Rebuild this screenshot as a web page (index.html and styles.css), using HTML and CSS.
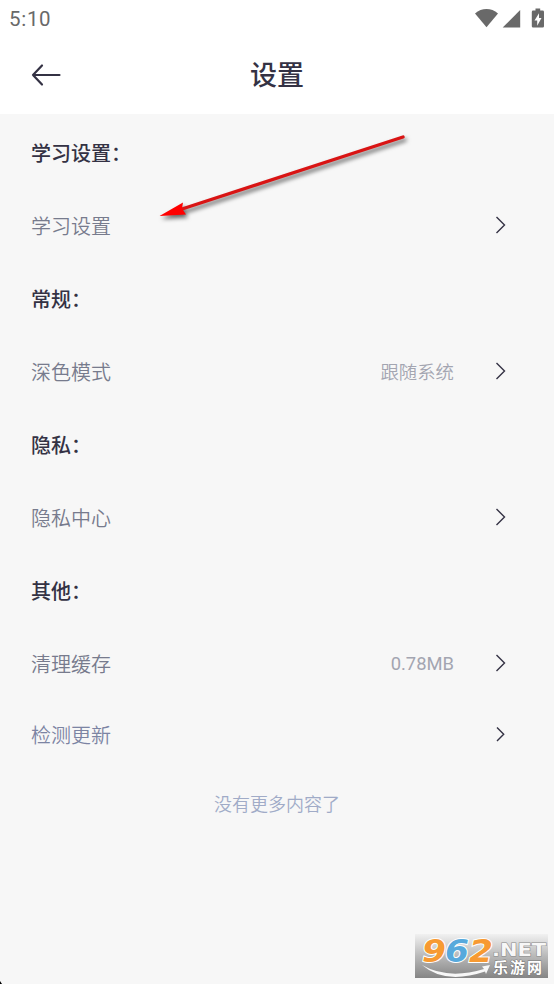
FILE: index.html
```
<!DOCTYPE html>
<html lang="zh-CN">
<head>
<meta charset="utf-8">
<title>设置</title>
<link rel="stylesheet" href="styles.css">
</head>
<body>
<div class="screen">
  <header class="header">
    <div class="status">
      <span class="clock">5:10</span>
      <svg class="status-icons" width="69" height="22" viewBox="0 0 69 22" fill="#696969">
        <path d="M0 5.400C3.500 2.400 7.400 1 11.500 1S19.500 2.400 23 5.400L11.500 19.300Z"/>
        <path d="M45.200 2V19.500H27.700Z"/>
        <path fill-rule="evenodd" d="M60.500.6h4.700v2h2.500q1.300 0 1.300 1.300v14.300q0 1.300-1.300 1.300h-9.600q-1.300 0-1.300-1.300V3.900q0-1.300 1.300-1.300h2.400ZM64 5.200l-4.500 7.300h2.700v5.200l4.300-7.600h-2.500Z"/>
      </svg>
    </div>
    <nav class="nav">
      <svg class="back" width="30" height="22" viewBox="0 0 30 22">
        <path d="M28.500 11H2M11 1.500 2 11l9 9.500"/>
      </svg>
      <h1 class="title">设置</h1>
    </nav>
  </header>
  <main class="list">
    <h2 class="heading">学习设置<span class="colon">：</span></h2>
    <div class="row"><span class="label">学习设置</span><svg class="chevron" width="12" height="20" viewBox="0 0 12 20"><path d="M1.500 2 9.500 10l-8 8"/></svg></div>
    <h2 class="heading">常规<span class="colon">：</span></h2>
    <div class="row"><span class="label">深色模式</span><span class="value">跟随系统</span><svg class="chevron" width="12" height="20" viewBox="0 0 12 20"><path d="M1.500 2 9.500 10l-8 8"/></svg></div>
    <h2 class="heading">隐私<span class="colon">：</span></h2>
    <div class="row"><span class="label">隐私中心</span><svg class="chevron" width="12" height="20" viewBox="0 0 12 20"><path d="M1.500 2 9.500 10l-8 8"/></svg></div>
    <h2 class="heading">其他<span class="colon">：</span></h2>
    <div class="row"><span class="label">清理缓存</span><span class="value latin">0.78MB</span><svg class="chevron" width="12" height="20" viewBox="0 0 12 20"><path d="M1.500 2 9.500 10l-8 8"/></svg></div>
    <div class="row update"><span class="label">检测更新</span><svg class="chevron" width="12" height="20" viewBox="0 0 12 20"><path d="M2 3.500 8.700 10.200 2 17"/></svg></div>
    <p class="end">没有更多内容了</p>
  </main>
  <svg class="pointer" width="270" height="105" viewBox="0 0 270 105">
    <path class="shaft" d="M32 84 253 12"/>
    <path class="tip" d="M9.500 91 33 77.500 32 83.500 36 89.500Z"/>
  </svg>
  <svg class="watermark" width="133" height="44" viewBox="0 0 133 44">
    <defs>
      <linearGradient id="plate" x1="0" y1="0" x2="0" y2="1"><stop offset="0" stop-color="#f1f1f1"/><stop offset=".5" stop-color="#b9b9b9"/><stop offset="1" stop-color="#858585"/></linearGradient>
    </defs>
    <rect width="133" height="44" fill="url(#plate)"/>
    <path class="swoosh" d="M7 31Q33 46 69 35L67 32.500 75 31 71 40 70 37.500Q30 51 7 31Z"/>
    <g class="digits">
      <text x="7" y="27.500" textLength="24" lengthAdjust="spacingAndGlyphs" fill="#f79a32">9</text>
      <text x="30" y="27.500" textLength="24" lengthAdjust="spacingAndGlyphs" fill="#57a9dc">6</text>
      <text x="54" y="27.500" textLength="24" lengthAdjust="spacingAndGlyphs" fill="#f79a32">2</text>
    </g>
    <text class="domain" x="77" y="22" textLength="54" lengthAdjust="spacingAndGlyphs">.NET</text>
    <text class="site" x="78" y="39" textLength="49">乐游网</text>
  </svg>
  <svg class="corner" width="3" height="4" viewBox="0 0 3 4"><path d="M0 1 2 4H0Z"/></svg>
</div>
</body>
</html>
```

FILE: styles.css
```
* { box-sizing: border-box; }
body { margin: 0; font-family: Roboto, "Noto Sans CJK SC", sans-serif; }
.screen { position: relative; width: 554px; height: 984px; overflow: hidden; background: #f7f7f7; color: #343244; }
.header { height: 114px; background: #fff; }
.status { height: 38px; display: flex; align-items: center; justify-content: space-between; padding: 0 10px 0 9px; }
.clock { font-size: 20.5px; line-height: 38px; letter-spacing: .7px; color: #696969; font-weight: 400; }
.status-icons { overflow: visible; margin-top: -1px; }
.nav { height: 76px; display: grid; grid-template-columns: 60px 1fr 60px; align-items: center; }
.back { margin: -2px 0 0 31px; overflow: visible; }
.back path { fill: none; stroke: #343244; stroke-width: 2.2; stroke-linecap: round; stroke-linejoin: round; }
.title { margin: 0; text-align: center; font-size: 27px; font-weight: 500; line-height: 76px; }
.list { padding: 2px 47px 0 31px; }
.heading { margin: 0; height: 73px; line-height: 76px; font-size: 20px; font-weight: 500; }
.colon { display: inline-block; }
.row { height: 73px; display: flex; align-items: center; font-size: 20px; font-weight: 350; color: #777b8d; }
.label { flex: 1; }
.value { margin: -2px 41px 0 0; font-size: 18.4px; color: #a3a5b1; }
.latin { margin-top: 0; font-weight: 400; }
.chevron { flex: none; margin-top: -2px; }
.chevron path { fill: none; stroke: #343244; stroke-width: 1.4; }
.update { height: 69px; color: #7c84a3; }
.end { margin: 0 -16px 0 0; height: 70px; line-height: 72px; text-align: center; font-size: 18px; font-weight: 350; color: #a0abc7; }
.pointer { position: absolute; left: 150px; top: 125px; filter: drop-shadow(2px 3px 2px rgba(0,0,0,.6)); }
.shaft { stroke: #d91414; stroke-width: 3.4; stroke-linecap: round; }
.tip { fill: #f00; }
.watermark { position: absolute; left: 415px; top: 934px; }
.digits { font: italic 700 32px "DejaVu Sans", sans-serif; stroke: #fff; stroke-width: 2px; paint-order: stroke; }
.domain { font: 700 18px "DejaVu Sans", sans-serif; fill: #f7f7f7; stroke: #888; stroke-width: 1px; paint-order: stroke; }
.site { font: 700 15px "Noto Sans CJK SC", sans-serif; fill: #fff; stroke: #777; stroke-width: 1px; paint-order: stroke; }
.swoosh { fill: #f7f7f7; }
.corner { position: absolute; left: 0; bottom: 0; }
```
